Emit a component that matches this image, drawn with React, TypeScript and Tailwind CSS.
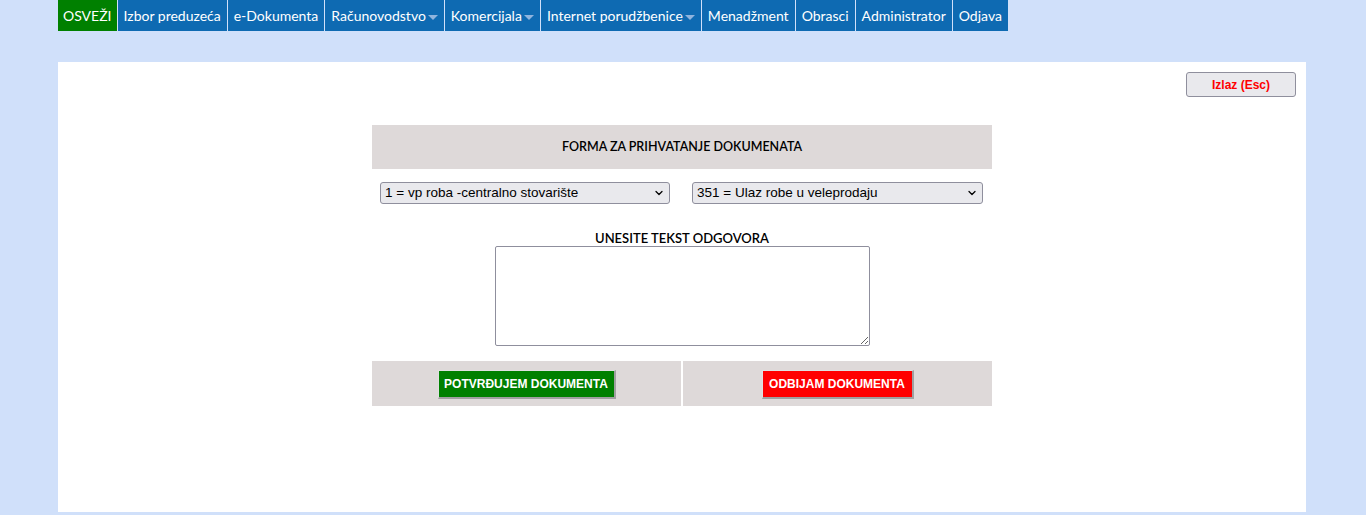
import React from 'react';
import { ChevronDown } from 'lucide-react';

const menu = [
  { label: 'Izbor preduzeća' },
  { label: 'e-Dokumenta' },
  { label: 'Računovodstvo', caret: true },
  { label: 'Komercijala', caret: true },
  { label: 'Internet porudžbenice', caret: true },
  { label: 'Menadžment' },
  { label: 'Obrasci' },
  { label: 'Administrator' },
  { label: 'Odjava' },
];

const Caret = () => (
  <span className="ml-[2px] mt-[3px] inline-block h-0 w-0 border-x-[5px] border-t-[5px] border-x-transparent border-t-[#8fb4de]" />
);

const btn =
  'h-[29px] whitespace-nowrap border-t border-l border-r-[2px] border-b-[2px] border-t-[#e0e0e0] border-l-[#e0e0e0] border-r-[#a0a0a0] border-b-[#a0a0a0] text-[12px] font-bold text-white';

const Select = ({ value, onChange, width, label }: { value: string; onChange: (v: string) => void; width: string; label: string }) => (
  <div className={`relative ${width}`}>
    <select
      value={value}
      onChange={(e) => onChange(e.target.value)}
      className="h-[22px] w-full appearance-none rounded-[3px] border border-[#8f8f9d] bg-[#e9e9ed] pl-[4px] pr-[20px] leading-[20px] text-black outline-none"
    >
      <option value={value}>{label}</option>
    </select>
    <ChevronDown className="pointer-events-none absolute right-[5px] top-[5px] h-[12px] w-[12px] text-black" strokeWidth={2.5} />
  </div>
);

export default function App() {
  const [left, setLeft] = React.useState('1');
  const [right, setRight] = React.useState('351');
  const [text, setText] = React.useState('');

  return (
    <div className="min-h-[515px] bg-[#d0e0fa] pb-[3px]" style={{ fontFamily: 'Lato, "Open Sans", sans-serif' }}>
      <nav className="flex pl-[58px] text-[14px] leading-[31px] text-white">
        <a className="h-[31px] whitespace-nowrap bg-[#008000] px-[5px]">OSVEŽI</a>
        {menu.map((m) => (
          <a key={m.label} className="ml-px flex h-[31px] items-center whitespace-nowrap bg-[#0e6ab2] px-[6px]">
            {m.label}
            {m.caret && <Caret />}
          </a>
        ))}
      </nav>

      <main className="ml-[58px] mr-[60px] mt-[31px] h-[450px] bg-white pt-[10px]">
        <div className="flex justify-end pr-[10px]">
          <button
            className="h-[25px] w-[110px] rounded-[3px] border border-[#8f8f9d] bg-[#e9e9ed] text-[12px] font-bold text-[#ff0000]"
            style={{ fontFamily: '"Liberation Sans", Arial, sans-serif' }}
          >
            Izlaz (Esc)
          </button>
        </div>

        <div className="mx-auto mt-[28px] w-[620px]">
          <div className="flex h-[44px] items-center justify-center bg-[#ded9d9] text-[12.5px] font-semibold text-black">
            FORMA ZA PRIHVATANJE DOKUMENATA
          </div>

          <div
            className="mt-[13px] flex justify-between pl-[8px] pr-[9px] text-[13.5px]"
            style={{ fontFamily: '"Liberation Sans", Arial, sans-serif' }}
          >
            <Select value={left} onChange={setLeft} width="w-[290px]" label="1 = vp roba -centralno stovarište" />
            <Select value={right} onChange={setRight} width="w-[291px]" label="351 = Ulaz robe u veleprodaju" />
          </div>

          <div className="mt-[26px] flex flex-col items-center">
            <div className="text-[13px] font-semibold leading-[16px] text-black">UNESITE TEKST ODGOVORA</div>
            <textarea
              value={text}
              onChange={(e) => setText(e.target.value)}
              className="h-[100px] w-[375px] rounded-[2px] border border-[#8f8f9d] bg-white"
            />
          </div>

          <div className="mt-[15px] flex h-[45px] gap-[2px]" style={{ fontFamily: '"Liberation Sans", Arial, sans-serif' }}>
            <div className="flex w-[309px] items-center justify-center bg-[#ded9d9] pt-[2px]">
              <button className={`${btn} w-[178px] bg-[#008000]`}>POTVRĐUJEM DOKUMENTA</button>
            </div>
            <div className="flex w-[309px] items-center justify-center bg-[#ded9d9] pt-[2px]">
              <button className={`${btn} w-[152px] bg-[#ff0000]`}>ODBIJAM DOKUMENTA</button>
            </div>
          </div>
        </div>
      </main>
    </div>
  );
}
